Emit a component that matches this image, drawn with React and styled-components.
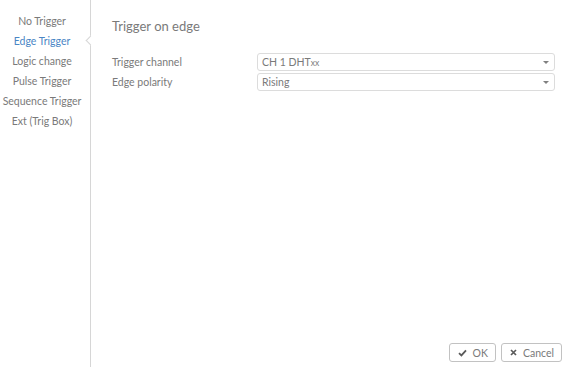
import styled, { createGlobalStyle } from "styled-components";

const GlobalStyle = createGlobalStyle`
  html, body {
    margin: 0;
    padding: 0;
    background: #fff;
  }
  body {
    font-family: Lato, "Open Sans", sans-serif;
    color: #7a7a7a;
  }
`;

const Layout = styled.div`
  display: flex;
  height: 100vh;
  box-sizing: border-box;
`;

const Sidebar = styled.nav`
  position: relative;
  width: 91px;
  flex: none;
  padding-top: 11px;
  padding-right: 6px;
  box-sizing: border-box;
  border-right: 1px solid #d6d6d6;
  margin-bottom: 6px;
  display: flex;
  flex-direction: column;
`;

const Notch = styled.span`
  position: absolute;
  right: -4px;
  top: 37px;
  width: 6px;
  height: 6px;
  background: #fff;
  border-left: 1px solid #d6d6d6;
  border-bottom: 1px solid #d6d6d6;
  transform: rotate(45deg);
`;

const NavItem = styled.div`
  font-size: 10.5px;
  line-height: 20px;
  text-align: center;
  white-space: nowrap;
  color: ${(p) => (p.active ? "#4a86c5" : "#7a7a7a")};
`;

const Main = styled.main`
  flex: 1;
  display: flex;
  flex-direction: column;
  padding: 16px 7px 11px 21px;
  min-width: 0;
`;

const Title = styled.h1`
  margin: 0 0 17px;
  font-size: 13px;
  font-weight: 400;
  line-height: 20px;
  color: #7a7a7a;
`;

const Form = styled.div`
  display: flex;
  flex-direction: column;
  gap: 2px;
  padding-right: 7px;
`;

const Row = styled.div`
  display: grid;
  grid-template-columns: 145px 1fr;
  align-items: center;
  height: 18px;
`;

const Label = styled.label`
  font-size: 10.5px;
  color: #7a7a7a;
`;

const Select = styled.div`
  position: relative;
  height: 18px;
  box-sizing: border-box;
  border: 1px solid #dcdcdc;
  border-radius: 3px;
  padding: 0 4px;
  font-size: 10.5px;
  line-height: 16px;
  color: #7a7a7a;

  &::after {
    content: "";
    position: absolute;
    right: 5px;
    top: 7px;
    border-left: 3px solid transparent;
    border-right: 3px solid transparent;
    border-top: 3px solid #808080;
  }
`;

const Small = styled.span`
  font-size: 8.5px;
`;

const Spacer = styled.div`
  flex: 1;
`;

const Actions = styled.div`
  display: flex;
  justify-content: flex-end;
  gap: 5px;
`;

const Button = styled.button`
  display: inline-flex;
  align-items: center;
  gap: 6px;
  height: 19px;
  padding: 0 7px 0 8px;
  border: 1px solid #c2c2c2;
  border-radius: 3px;
  background: #fff;
  font-family: inherit;
  font-size: 10.5px;
  color: #7a7a7a;
`;

function CheckIcon() {
  return (
    <svg width="9" height="8" viewBox="0 0 9 8">
      <path d="M1 4.2 L3.4 6.4 L8 1.4" fill="none" stroke="#5a5a5a" strokeWidth="1.8" />
    </svg>
  );
}

function CrossIcon() {
  return (
    <svg width="7" height="7" viewBox="0 0 7 7">
      <path d="M1 1 L6 6 M6 1 L1 6" fill="none" stroke="#5a5a5a" strokeWidth="1.7" />
    </svg>
  );
}

const items = [
  "No Trigger",
  "Edge Trigger",
  "Logic change",
  "Pulse Trigger",
  "Sequence Trigger",
  "Ext (Trig Box)",
];

export default function App() {
  return (
    <>
      <GlobalStyle />
      <Layout>
        <Sidebar>
          {items.map((item) => (
            <NavItem key={item} active={item === "Edge Trigger"}>
              {item}
            </NavItem>
          ))}
          <Notch />
        </Sidebar>
        <Main>
          <Title>Trigger on edge</Title>
          <Form>
            <Row>
              <Label>Trigger channel</Label>
              <Select>
                CH 1 DHT<Small>xx</Small>
              </Select>
            </Row>
            <Row>
              <Label>Edge polarity</Label>
              <Select>Rising</Select>
            </Row>
          </Form>
          <Spacer />
          <Actions>
            <Button>
              <CheckIcon /> OK
            </Button>
            <Button>
              <CrossIcon /> Cancel
            </Button>
          </Actions>
        </Main>
      </Layout>
    </>
  );
}
